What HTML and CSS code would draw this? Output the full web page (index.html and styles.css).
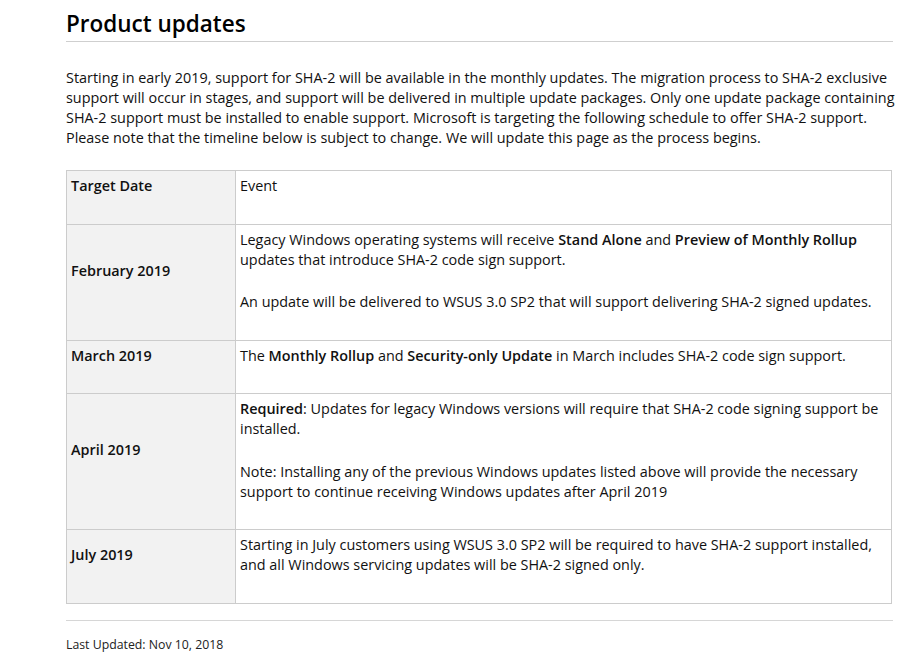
FILE: index.html
```html
<!DOCTYPE html>
<html>
<head>
<meta charset="utf-8">
<link rel="stylesheet" href="styles.css">
</head>
<body>
<main class="page">
  <h1 class="title">Product updates</h1>
  <p class="intro">Starting in early 2019, support for SHA-2 will be available in the monthly updates. The migration process to SHA-2 exclusive<br>
  support will occur in stages, and support will be delivered in multiple update packages. Only one update package containing<br>
  SHA-2 support must be installed to enable support. Microsoft is targeting the following schedule to offer SHA-2 support.<br>
  Please note that the timeline below is subject to change. We will update this page as the process begins.</p>
  <table class="sched">
    <tr>
      <th class="date"><p>Target Date</p></th>
      <th class="event"><p>Event</p></th>
    </tr>
    <tr>
      <td class="date"><p>February 2019</p></td>
      <td class="event"><p>Legacy Windows operating systems will receive <b>Stand Alone</b> and <b>Preview of Monthly Rollup</b> updates that introduce SHA-2 code sign support.</p><p>An update will be delivered to WSUS 3.0 SP2 that will support delivering SHA-2 signed updates.</p></td>
    </tr>
    <tr>
      <td class="date"><p>March 2019</p></td>
      <td class="event"><p>The <b>Monthly Rollup</b> and <b>Security-only Update</b> in March includes SHA-2 code sign support.</p></td>
    </tr>
    <tr>
      <td class="date"><p>April 2019</p></td>
      <td class="event"><p><b>Required</b>: Updates for legacy Windows versions will require that SHA-2 code signing support be installed.</p><p>Note: Installing any of the previous Windows updates listed above will provide the necessary support to continue receiving Windows updates after April 2019</p></td>
    </tr>
    <tr>
      <td class="date"><p>July 2019</p></td>
      <td class="event"><p>Starting in July customers using WSUS 3.0 SP2 will be required to have SHA-2 support installed, and all Windows servicing updates will be SHA-2 signed only.</p></td>
    </tr>
  </table>
  <hr class="rule">
  <p class="updated">Last Updated: Nov 10, 2018</p>
</main>
</body>
</html>
```

FILE: styles.css
```css
html, body {
  margin: 0;
  padding: 0;
  background: #ffffff;
}
body {
  font-family: "Open Sans", "Noto Sans", sans-serif;
  color: #111111;
  font-size: 14.4px;
  line-height: 20px;
}
.page {
  margin-left: 66px;
  width: 827px;
  padding-top: 8px;
}
.title {
  margin: 0;
  font-size: 22.5px;
  line-height: 32px;
  font-weight: 600;
  color: #000;
  padding-bottom: 1px;
  border-bottom: 1px solid #cfcfcf;
}
.intro {
  margin: 26px 0 0 0;
  width: 847px;
  white-space: nowrap;
}
.sched {
  margin-top: 22px;
  border-collapse: collapse;
  width: 826px;
}
.sched th, .sched td {
  border: 1px solid #cccccc;
  padding: 5px 5px 5px 4px;
  text-align: left;
}
.sched th {
  vertical-align: top;
  font-weight: 600;
}
.sched td {
  vertical-align: middle;
}
.sched .date {
  width: 159px;
  background: #f2f2f2;
}
.sched td.date {
  font-weight: 600;
}
.sched th.event {
  font-weight: 400;
}
.sched td.event {
  vertical-align: top;
}
.sched p {
  margin: 0 0 22.5px 0;
}
b {
  font-weight: 600;
}
.rule {
  margin: 16px 0 0 0;
  border: none;
  border-top: 1px solid #d6d6d6;
  width: 827px;
}
.updated {
  margin: 14px 0 0 0;
  font-size: 12.3px;
  line-height: 20px;
  color: #222;
}
```
